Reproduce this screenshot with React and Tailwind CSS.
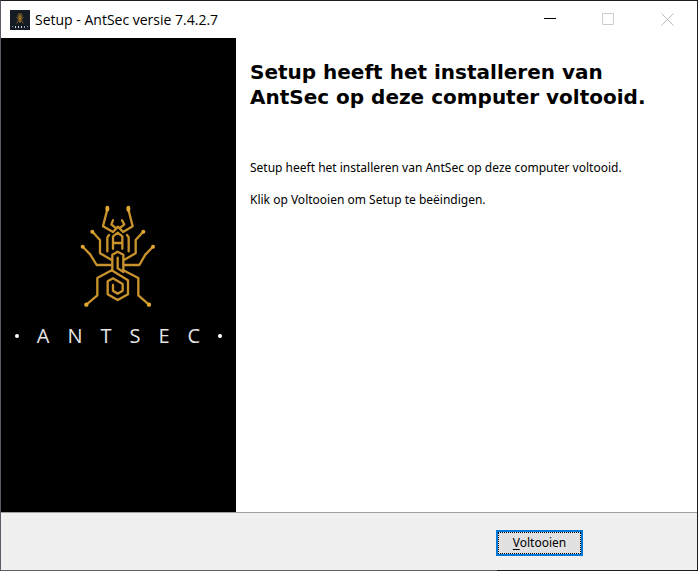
function AntLogo({ className, strokeWidth = 7 }) {
  return (
    <svg viewBox="0 0 291 360" className={className} fill="none" stroke="#c8922c" strokeWidth={strokeWidth} strokeLinejoin="round" strokeLinecap="round" aria-hidden="true">
      {/* antennae, mandibles and head */}
      <path d="M112 43 99 94 129 111 144 95 159 111 188 94 175 43" />
      <path d="M129 76 124 88 135 97 M156 76 163 88 152 97" />
      {/* thorax */}
      <path d="M117 120 112 127V169 M171 120 176 127V169" />
      <path d="M129 161V124L143 113 157 124V161 M129 144H157" />
      {/* upper legs */}
      <path d="M68 111 90 135V175L124 194 M219 111 197 135V175L163 194" />
      {/* middle legs */}
      <path d="M39 156 61 179 80 210H124 M248 156 226 179 208 210H163" />
      {/* waist */}
      <path d="M127 226V179L143 170 160 179V231L143 220V188" />
      {/* lower legs and abdomen */}
      <path d="M50 328 82 301V249L125 226 174 256V298L143 315 113 298V259L129 250 158 267V287L143 296 129 287V270" />
      <path d="M236 328 205 301V249L160 226" />
      <g fill="#e0a733" stroke="none">
        <ellipse cx="112" cy="41" rx="6" ry="9" />
        <ellipse cx="175" cy="41" rx="6" ry="9" />
        <circle cx="67" cy="110" r="6" />
        <circle cx="220" cy="110" r="6" />
        <circle cx="38" cy="155" r="6" />
        <circle cx="249" cy="155" r="6" />
        <circle cx="49" cy="329" r="6.5" />
        <circle cx="237" cy="329" r="6.5" />
      </g>
    </svg>
  );
}

function TitleBar() {
  return (
    <header className="flex h-[37px] items-center bg-white pl-[9px]">
      <span className="flex size-5 flex-col items-center bg-[#151b24] pt-[2px]">
        <AntLogo className="h-3 w-[10px]" strokeWidth={14} />
        <span className="mt-[2px] flex w-full justify-between px-[2px]">
          <i className="size-px bg-gray-400" />
          <i className="h-[2px] w-px bg-gray-300" />
          <i className="h-[2px] w-px bg-gray-300" />
          <i className="h-[2px] w-px bg-gray-300" />
          <i className="h-[2px] w-px bg-gray-400" />
          <i className="size-px bg-gray-400" />
        </span>
      </span>
      <span className="ml-[5px] grow font-['Open_Sans','Noto_Sans',sans-serif] text-[14px] leading-5 whitespace-nowrap">
        Setup - AntSec versie 7.4.2.7
      </span>
      <button type="button" aria-label="Minimaliseren" className="flex h-full w-[59px] items-center justify-center">
        <svg width="13" height="13" viewBox="0 0 13 13" stroke="#000" shapeRendering="crispEdges"><path d="M1 5.500H13" /></svg>
      </button>
      <button type="button" aria-label="Maximaliseren" disabled className="flex h-full w-[59px] items-center justify-center">
        <svg width="13" height="13" viewBox="0 0 13 13" fill="none" stroke="#ccc"><path d="M.5.500H11.500V11.500H.5Z" /></svg>
      </button>
      <button type="button" aria-label="Sluiten" disabled className="flex h-full w-[59px] items-center justify-center">
        <svg width="13" height="13" viewBox="0 0 13 13" fill="none" stroke="#bbb"><path d="M.5.500 12.500 12.500M12.500.5.500 12.500" /></svg>
      </button>
    </header>
  );
}

function BrandPanel() {
  return (
    <aside className="flex w-[235px] shrink-0 flex-col items-center bg-black pt-[157px]">
      <AntLogo className="h-[120px] w-[97px]" />
      <div className="mt-[6px] flex items-center gap-[18px] font-['Open_Sans','Noto_Sans',sans-serif] text-[20px] leading-[30px] font-medium text-[#e4e4e4]">
        <i className="size-1 rounded-full bg-white" />
        {["A", "N", "T", "S", "E", "C"].map((letter) => (
          <span key={letter}>{letter}</span>
        ))}
        <i className="size-1 rounded-full bg-white" />
      </div>
    </aside>
  );
}

export default function App() {
  return (
    <div className="flex min-h-screen flex-col border-t border-r border-l border-t-[#1c1c20] border-r-[#1c1c20] border-l-[#5a5c66] bg-white text-black">
      <TitleBar />
      <main className="flex grow">
        <BrandPanel />
        <section className="grow px-[14px] pt-[22px]">
          <h1 className="max-w-[410px] font-['DejaVu_Sans',Verdana,sans-serif] text-[20px] leading-[25px] font-bold">
            Setup heeft het installeren van AntSec op deze computer voltooid.
          </h1>
          <div className="mt-[50px] flex flex-col gap-4 font-['Noto_Sans',Tahoma,sans-serif] text-[12px] leading-4">
            <p>Setup heeft het installeren van AntSec op deze computer voltooid.</p>
            <p>Klik op Voltooien om Setup te beëindigen.</p>
          </div>
        </section>
      </main>
      <footer className="flex h-[58px] justify-end border-t border-[#a0a0a0] bg-[#f0f0f0] pt-[17px] pr-[114px]">
        <button type="button" className="h-[26px] w-[87px] border-2 border-[#0078d7] bg-[#e1e1e1] font-['Noto_Sans',Tahoma,sans-serif] text-[12px] leading-5">
          <span className="flex h-full items-center justify-center border border-dotted border-black">
            <span><u className="underline-offset-2">V</u>oltooien</span>
          </span>
        </button>
      </footer>
      <div className="h-px bg-[linear-gradient(to_right,#5a5c66_496px,#1c1c20_496px)]" />
    </div>
  );
}
